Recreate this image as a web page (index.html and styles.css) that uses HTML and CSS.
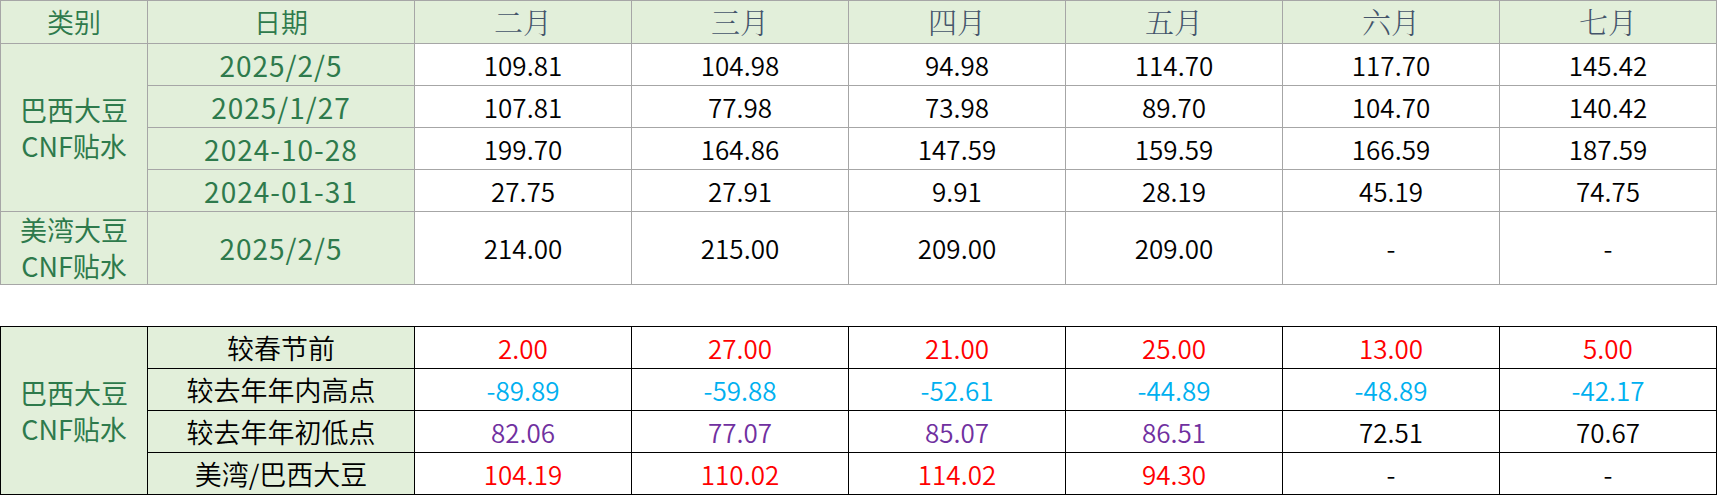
FILE: index.html
```html
<!DOCTYPE html>
<html lang="zh-CN">
<head>
<meta charset="utf-8">
<title>大豆CNF贴水</title>
<link rel="stylesheet" href="styles.css">
</head>
<body>
<table class="grid grid-top">
  <colgroup>
    <col class="c-cat"><col class="c-date">
    <col class="c-m"><col class="c-m"><col class="c-m"><col class="c-m"><col class="c-m"><col class="c-m">
  </colgroup>
  <tr class="r-head">
    <th class="lbl green">类别</th>
    <th class="lbl green">日期</th>
    <th class="lbl month">二月</th>
    <th class="lbl month">三月</th>
    <th class="lbl month">四月</th>
    <th class="lbl month">五月</th>
    <th class="lbl month">六月</th>
    <th class="lbl month">七月</th>
  </tr>
  <tr class="r">
    <td class="lbl green cat" rowspan="4">巴西大豆<br>CNF贴水</td>
    <td class="lbl green date">2025/2/5</td>
    <td>109.81</td><td>104.98</td><td>94.98</td><td>114.70</td><td>117.70</td><td>145.42</td>
  </tr>
  <tr class="r">
    <td class="lbl green date">2025/1/27</td>
    <td>107.81</td><td>77.98</td><td>73.98</td><td>89.70</td><td>104.70</td><td>140.42</td>
  </tr>
  <tr class="r">
    <td class="lbl green date">2024-10-28</td>
    <td>199.70</td><td>164.86</td><td>147.59</td><td>159.59</td><td>166.59</td><td>187.59</td>
  </tr>
  <tr class="r">
    <td class="lbl green date">2024-01-31</td>
    <td>27.75</td><td>27.91</td><td>9.91</td><td>28.19</td><td>45.19</td><td>74.75</td>
  </tr>
  <tr class="r-tall">
    <td class="lbl green cat">美湾大豆<br>CNF贴水</td>
    <td class="lbl green date">2025/2/5</td>
    <td>214.00</td><td>215.00</td><td>209.00</td><td>209.00</td><td>-</td><td>-</td>
  </tr>
</table>

<table class="grid grid-bottom">
  <colgroup>
    <col class="c-cat"><col class="c-date">
    <col class="c-m"><col class="c-m"><col class="c-m"><col class="c-m"><col class="c-m"><col class="c-m">
  </colgroup>
  <tr class="r">
    <td class="lbl green cat" rowspan="4">巴西大豆<br>CNF贴水</td>
    <td class="lbl">较春节前</td>
    <td class="red">2.00</td><td class="red">27.00</td><td class="red">21.00</td><td class="red">25.00</td><td class="red">13.00</td><td class="red">5.00</td>
  </tr>
  <tr class="r">
    <td class="lbl">较去年年内高点</td>
    <td class="blue">-89.89</td><td class="blue">-59.88</td><td class="blue">-52.61</td><td class="blue">-44.89</td><td class="blue">-48.89</td><td class="blue">-42.17</td>
  </tr>
  <tr class="r">
    <td class="lbl">较去年年初低点</td>
    <td class="purple">82.06</td><td class="purple">77.07</td><td class="purple">85.07</td><td class="purple">86.51</td><td>72.51</td><td>70.67</td>
  </tr>
  <tr class="r">
    <td class="lbl">美湾/巴西大豆</td>
    <td class="red">104.19</td><td class="red">110.02</td><td class="red">114.02</td><td class="red">94.30</td><td>-</td><td>-</td>
  </tr>
</table>
</body>
</html>
```

FILE: styles.css
```css
html, body {
  margin: 0;
  padding: 0;
  background: #ffffff;
}

body {
  font-family: "Noto Sans CJK SC", "Noto Sans", sans-serif;
  font-size: 26px;
  font-weight: 350;
  color: #000000;
}

.grid {
  border-collapse: collapse;
  table-layout: fixed;
  width: 1717px;
}

.grid td,
.grid th {
  padding: 0;
  text-align: center;
  vertical-align: middle;
  font-weight: 350;
  line-height: 36px;
  white-space: nowrap;
  overflow: hidden;
}

.grid-top td,
.grid-top th {
  border: 1px solid #a6a6a6;
}

.grid-bottom {
  margin-top: 41px;
}

.grid-bottom td {
  border: 1px solid #000000;
}

.c-cat { width: 147px; }
.c-date { width: 267px; }
.c-m { width: 217px; }

.r-head { height: 43px; }
.r { height: 42px; }
.r-tall { height: 73px; }

.lbl {
  background: #e2efda;
  font-size: 27px;
}

.green {
  color: #2e7a4c;
  font-weight: 400;
}

.grid .date {
  font-size: 28px;
  letter-spacing: 1px;
  font-weight: 400;
}

.grid .month {
  color: #44546a;
  font-family: "Noto Serif CJK SC", "Noto Sans CJK SC", serif;
  font-size: 29px;
  font-weight: 300;
}

.grid .cat {
  font-size: 27px;
  font-weight: 400;
  line-height: 36px;
}

.red { color: #ff0000; }
.blue { color: #00b0f0; }
.purple { color: #7030a0; }
```
